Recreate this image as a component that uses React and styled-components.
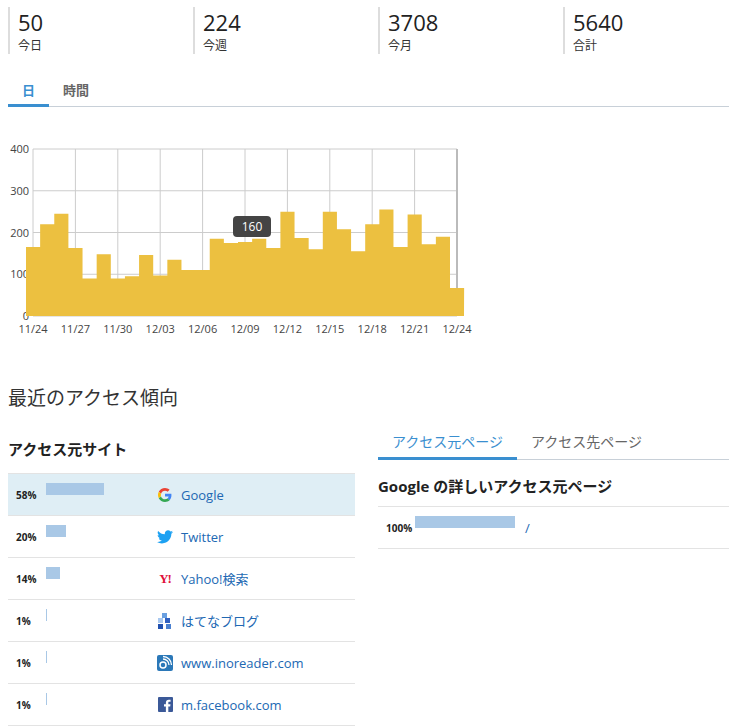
import React from "react";
import styled, { createGlobalStyle } from "styled-components";

const G = createGlobalStyle`
  body{margin:0;background:#fff;font-family:"Open Sans","Noto Sans CJK JP",sans-serif;color:#222;}
`;
const Page = styled.div`padding:0 0 0 8px;width:721px;`;
const Stats = styled.div`display:grid;grid-template-columns:repeat(4,185px);padding-top:7px;`;
const Stat = styled.div`border-left:2px solid #ddd;padding-left:8px;height:47px;`;
const Num = styled.div`font-size:22px;line-height:31px;color:#222;`;
const Lbl = styled.div`font-size:12px;line-height:16px;color:#333;`;
const Tabs = styled.div`display:flex;border-bottom:1px solid #c8d0d8;margin-top:${p=>p.mt}px;width:${p=>p.w}px;`;
const Tab = styled.div`padding:0 ${p=>p.px}px;height:${p=>p.h}px;line-height:${p=>p.h}px;font-size:${p=>p.fs}px;font-weight:${p=>p.bold?700:400};color:${p=>p.active?"#3a8fd0":"#666"};border-bottom:3px solid ${p=>p.active?"#3a8fd0":"transparent"};margin-bottom:-1px;`;
const ChartWrap = styled.div`position:relative;margin-top:31px;height:200px;margin-left:-8px;`;
const Tip = styled.div`position:absolute;left:233px;top:${216-138}px;width:38px;height:21px;background:#444;color:#fff;border-radius:4px;font-size:12px;text-align:center;line-height:21px;`;
const H2 = styled.h2`margin:48px 0 0;font-size:19px;font-weight:400;color:#333;line-height:24px;`;
const Cols = styled.div`display:flex;gap:23px;margin-top:29px;`;
const Left = styled.div`width:347px;`;
const Right = styled.div`width:351px;margin-top:-12px;`;
const H3 = styled.h3`margin:0;font-size:15px;font-weight:700;line-height:${p=>p.lh}px;color:#222;`;
const Row = styled.div`display:flex;align-items:center;height:41px;border-bottom:1px solid #e3e3e3;background:${p=>p.sel?"#dfeef5":"transparent"};${p=>p.top&&"border-top:1px solid #e3e3e3;"}`;
const Pct = styled.div`font-size:10px;font-weight:700;width:${p=>p.w}px;padding-left:8px;box-sizing:border-box;flex:none;`;
const BarCell = styled.div`width:${p=>p.w}px;flex:none;height:24px;display:flex;align-items:flex-start;`;
const Bar = styled.div`height:${p=>p.h}px;background:#a9c8e6;`;
const Site = styled.div`display:flex;align-items:center;gap:8px;color:#2168b3;font-size:13px;`;
const Ico = styled.div`width:16px;height:16px;display:flex;align-items:center;justify-content:center;`;

const vals=[165,220,245,163,90,148,90,95,146,97,135,110,110,185,175,177,185,163,250,187,160,250,208,155,220,255,165,243,172,190,67];
const labels=["11/24","11/27","11/30","12/03","12/06","12/09","12/12","12/15","12/18","12/21","12/24"];

function Chart(){
  const x0=33,x1=457,yb=316,yt=149,dx=(x1-x0)/30,k=(yb-yt)/400,oy=138;
  let d=`M${x0-7},${yb-oy}`;
  vals.forEach((v,i)=>{const l=x0+i*dx-7,r=l+dx;d+=` L${l},${yb-oy-v*k} L${r},${yb-oy-v*k}`;});
  d+=` L${x0+30*dx+7},${yb-oy} Z`;
  return <svg width="729" height="200" style={{display:"block"}}>
    {[0,100,200,300,400].map(v=><g key={v}><line x1={x0} x2={x1} y1={yb-oy-v*k} y2={yb-oy-v*k} stroke="#ccc"/><text x={29} y={yb-oy-v*k+4} fontSize="11" textAnchor="end" fill="#444" fontFamily="Open Sans">{v}</text></g>)}
    {labels.map((l,i)=><g key={l}><line x1={x0+i*3*dx} x2={x0+i*3*dx} y1={yt-oy} y2={yb-oy} stroke="#ccc"/><text x={x0+i*3*dx} y={yb-oy+17} fontSize="11" textAnchor="middle" fill="#444" fontFamily="Open Sans">{l}</text></g>)}
    <line x1={x1} x2={x1} y1={yt-oy} y2={yb-oy} stroke="#bbb" strokeWidth="2"/>
    <path d={d} fill="#ecc040"/>
  </svg>;
}

const GoogleI=()=><svg width="14" height="14" viewBox="0 0 48 48"><path fill="#EA4335" d="M24 9.5c3.5 0 6.6 1.2 9 3.5l6.7-6.7C35.6 2.4 30.2 0 24 0 14.6 0 6.6 5.4 2.7 13.2l7.8 6.1C12.4 13.6 17.7 9.5 24 9.5z"/><path fill="#4285F4" d="M46.1 24.6c0-1.6-.1-3.1-.4-4.6H24v9h12.4c-.5 2.9-2.2 5.300-4.6 7l7.5 5.8c4.3-4 6.8-9.9 6.8-17.2z"/><path fill="#FBBC05" d="M10.5 28.7c-.5-1.4-.8-3-.8-4.700s.3-3.2.8-4.700l-7.8-6.100C1 16.6 0 20.2 0 24s1 7.4 2.7 10.800l7.8-6.100z"/><path fill="#34A853" d="M24 48c6.5 0 11.9-2.100 15.9-5.800l-7.5-5.800c-2.100 1.400-4.800 2.300-8.400 2.300-6.300 0-11.600-4.200-13.500-9.900l-7.800 6.100C6.600 42.600 14.600 48 24 48z"/></svg>;
const TwitterI=()=><svg width="16" height="14" viewBox="0 0 24 20"><path fill="#1da1f2" d="M24 2.4c-.9.4-1.8.7-2.8.8 1-.6 1.8-1.6 2.2-2.7-1 .6-2 1-3.1 1.2C19.3.7 18 0 16.6 0c-2.7 0-4.9 2.2-4.9 4.9 0 .4 0 .8.1 1.1C7.7 5.8 4.1 3.9 1.7.9c-.4.7-.7 1.6-.7 2.5 0 1.7.9 3.2 2.2 4.1-.8 0-1.6-.2-2.2-.6v.1c0 2.4 1.7 4.4 3.9 4.8-.4.1-.8.2-1.3.2-.3 0-.6 0-.9-.1.6 2 2.4 3.4 4.6 3.4-1.7 1.3-3.8 2.1-6.1 2.1H0c2.2 1.4 4.8 2.2 7.5 2.2 9.1 0 14-7.5 14-14v-.6c1-.7 1.8-1.6 2.5-2.6z"/></svg>;
const YahooI=()=><span style={{color:"#e0103a",fontFamily:"Liberation Serif",fontWeight:700,fontSize:13,letterSpacing:-1}}>Y!</span>;
const HatenaI=()=><svg width="14" height="16" viewBox="0 0 14 16"><rect x="4" y="0" width="5" height="5" fill="#6aa0e0"/><rect x="0" y="5" width="5" height="5" fill="#a8c8f0"/><rect x="7" y="5" width="5" height="5" fill="#3060c0"/><rect x="0" y="11" width="5" height="5" fill="#2050b0"/><rect x="8" y="11" width="5" height="5" fill="#4a80d0"/></svg>;
const InoI=()=><svg width="16" height="16" viewBox="0 0 16 16"><rect width="16" height="16" rx="2" fill="#2b78b8"/><circle cx="6" cy="10" r="3" fill="none" stroke="#fff" strokeWidth="1.5"/><path d="M6 4a6 6 0 0 1 6 6M6 1.5a8.5 8.5 0 0 1 8.5 8.5" fill="none" stroke="#fff" strokeWidth="1.3"/></svg>;
const FbI=()=><svg width="15" height="15" viewBox="0 0 16 16"><rect width="16" height="16" rx="1" fill="#3b5998"/><path d="M11 16V10h2l.3-2.3H11V6.2c0-.7.2-1.1 1.1-1.1h1.3V3c-.2 0-1-.1-1.9-.1-1.9 0-3.1 1.1-3.1 3.2v1.7H6.4V10h2v6z" fill="#fff"/></svg>;

const rows=[["58%",58,<GoogleI/>,"Google",true],["20%",20,<TwitterI/>,"Twitter"],["14%",14,<YahooI/>,"Yahoo!検索"],["1%",1,<HatenaI/>,"はてなブログ"],["1%",1,<InoI/>,"www.inoreader.com"],["1%",1,<FbI/>,"m.facebook.com"]];

export default function App(){
  return <Page><G/>
    <Stats>{[["50","今日"],["224","今週"],["3708","今月"],["5640","合計"]].map(([n,l])=><Stat key={l}><Num>{n}</Num><Lbl>{l}</Lbl></Stat>)}</Stats>
    <Tabs mt={22} w={721}><Tab active bold px={14} h={28} fs={13}>日</Tab><Tab bold px={14} h={28} fs={13}>時間</Tab></Tabs>
    <ChartWrap><Chart/><Tip>160</Tip></ChartWrap>
    <H2>最近のアクセス傾向</H2>
    <Cols>
      <Left>
        <H3 lh={20}>アクセス元サイト</H3>
        <div style={{marginTop:14}}>
          {rows.map(([p,w,ic,t,sel],i)=><Row key={t} sel={sel} top={i===0}>
            <Pct w={38}>{p}</Pct><BarCell w={111}><Bar h={12} style={{width:w}}/></BarCell>
            <Site><Ico>{ic}</Ico>{t}</Site></Row>)}
        </div>
      </Left>
      <Right>
        <Tabs mt={0} w={351}><Tab active px={14} h={30} fs={14}>アクセス元ページ</Tab><Tab px={14} h={30} fs={14}>アクセス先ページ</Tab></Tabs>
        <div style={{marginTop:14}}><H3 lh={24}>Google の詳しいアクセス元ページ</H3></div>
        <div style={{marginTop:8}}>
          <Row top><Pct w={37}>100%</Pct><BarCell w={110}><Bar h={12} style={{width:100}}/></BarCell><Site>/</Site></Row>
        </div>
      </Right>
    </Cols>
  </Page>;
}
